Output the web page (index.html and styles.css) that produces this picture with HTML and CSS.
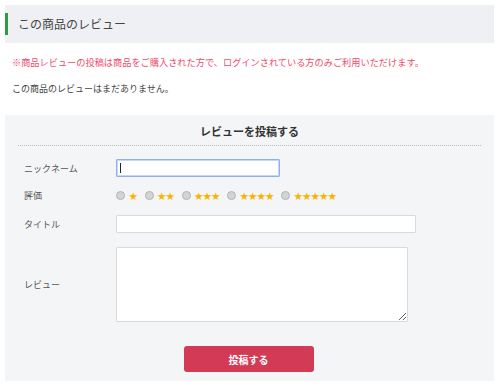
FILE: index.html
```html
<!DOCTYPE html>
<html lang="ja">
<head>
<meta charset="utf-8">
<title>この商品のレビュー</title>
<link rel="stylesheet" href="styles.css">
</head>
<body>
<div class="header"><h2 class="header-title">この商品のレビュー</h2></div>
<p class="note">※商品レビューの投稿は商品をご購入された方で、ログインされている方のみご利用いただけます。</p>
<p class="empty">この商品のレビューはまだありません。</p>
<form class="review-form">
  <h3 class="form-title">レビューを投稿する</h3>
  <div class="row row-nick">
    <label class="label">ニックネーム</label>
    <div class="field-wrap">
      <input class="input input-nick" type="text">
      <span class="caret"></span>
    </div>
  </div>
  <div class="row row-rate">
    <span class="label">評価</span>
    <div class="rates">
      <label class="rate"><input type="radio" name="r" class="radio"><span class="stars">★</span></label>
      <label class="rate"><input type="radio" name="r" class="radio"><span class="stars">★★</span></label>
      <label class="rate"><input type="radio" name="r" class="radio"><span class="stars">★★★</span></label>
      <label class="rate"><input type="radio" name="r" class="radio"><span class="stars">★★★★</span></label>
      <label class="rate"><input type="radio" name="r" class="radio"><span class="stars">★★★★★</span></label>
    </div>
  </div>
  <div class="row row-title">
    <label class="label">タイトル</label>
    <input class="input input-title" type="text">
  </div>
  <div class="row row-review">
    <label class="label">レビュー</label>
    <textarea class="textarea"></textarea>
  </div>
  <div class="actions">
    <button type="button" class="submit">投稿する</button>
  </div>
</form>
</body>
</html>
```
FILE: styles.css
```css
* { box-sizing: border-box; }
body {
  margin: 0;
  background: #fff;
  font-family: "Noto Sans CJK JP", "Noto Sans", sans-serif;
  color: #444;
}
.header {
  margin: 5px 6px 0 5px;
  height: 38px;
  background: #eff0f3;
  padding: 8px 0;
}
.header-title {
  margin: 0;
  height: 22px;
  line-height: 21px;
  border-left: 3px solid #2f9a48;
  padding-left: 10px;
  font-size: 12px;
  font-weight: normal;
  color: #444;
}
.note {
  margin: 13px 0 0 12px;
  font-size: 9.2px;
  line-height: 13px;
  color: #f04a6e;
}
.empty {
  margin: 13px 0 0 12px;
  font-size: 9px;
  line-height: 13px;
  color: #444;
}
.review-form {
  margin: 20px 6px 0 5px;
  background: #f4f5f7;
  padding: 8px 13px 10px;
  height: 266px;
}
.form-title {
  margin: 0;
  font-size: 11px;
  line-height: 16px;
  font-weight: bold;
  text-align: center;
  color: #333;
  padding-bottom: 6px;
  border-bottom: 1px dotted #bdbdbd;
}
.row {
  display: flex;
  align-items: center;
}
.label {
  width: 98px;
  padding-left: 6px;
  font-size: 9px;
  color: #555;
  flex: none;
}
.row-nick { margin-top: 13px; }
.row-rate { margin-top: 12px; height: 12px; }
.row-title { margin-top: 14px; }
.row-review { margin-top: 14px; }
.field-wrap { position: relative; }
.input {
  display: block;
  height: 18px;
  border: 1px solid #dadada;
  background: #fff;
  font-family: inherit;
  font-size: 10px;
  padding: 0 4px;
  border-radius: 1px;
}
.input-nick {
  width: 164px;
  border-color: #8fb1ea;
  box-shadow: 0 0 0 1px #c4d6f4 inset;
  outline: none;
}
.caret {
  position: absolute;
  left: 4px;
  top: 4px;
  width: 1px;
  height: 10px;
  background: #222;
}
.input-title { width: 300px; }
.rates {
  display: flex;
  align-items: center;
  gap: 7px;
}
.rate {
  display: flex;
  align-items: center;
  gap: 4px;
}
.radio {
  appearance: none;
  -webkit-appearance: none;
  margin: 0;
  width: 9px;
  height: 9px;
  border-radius: 50%;
  background: #d4d4d4;
  border: 1px solid #b3b3b3;
}
.stars {
  font-size: 8.5px;
  line-height: 10px;
  color: #f5b400;
}
.textarea {
  width: 292px;
  height: 75px;
  border: 1px solid #dadada;
  background: #fff;
  resize: both;
  border-radius: 1px;
}
.actions {
  display: flex;
  justify-content: center;
  margin-top: 24px;
}
.submit {
  width: 130px;
  height: 26px;
  border: none;
  border-radius: 3px;
  background: #d33a55;
  color: #fff;
  font-family: inherit;
  font-size: 10px;
  font-weight: bold;
  margin-right: 2px;
}
```
